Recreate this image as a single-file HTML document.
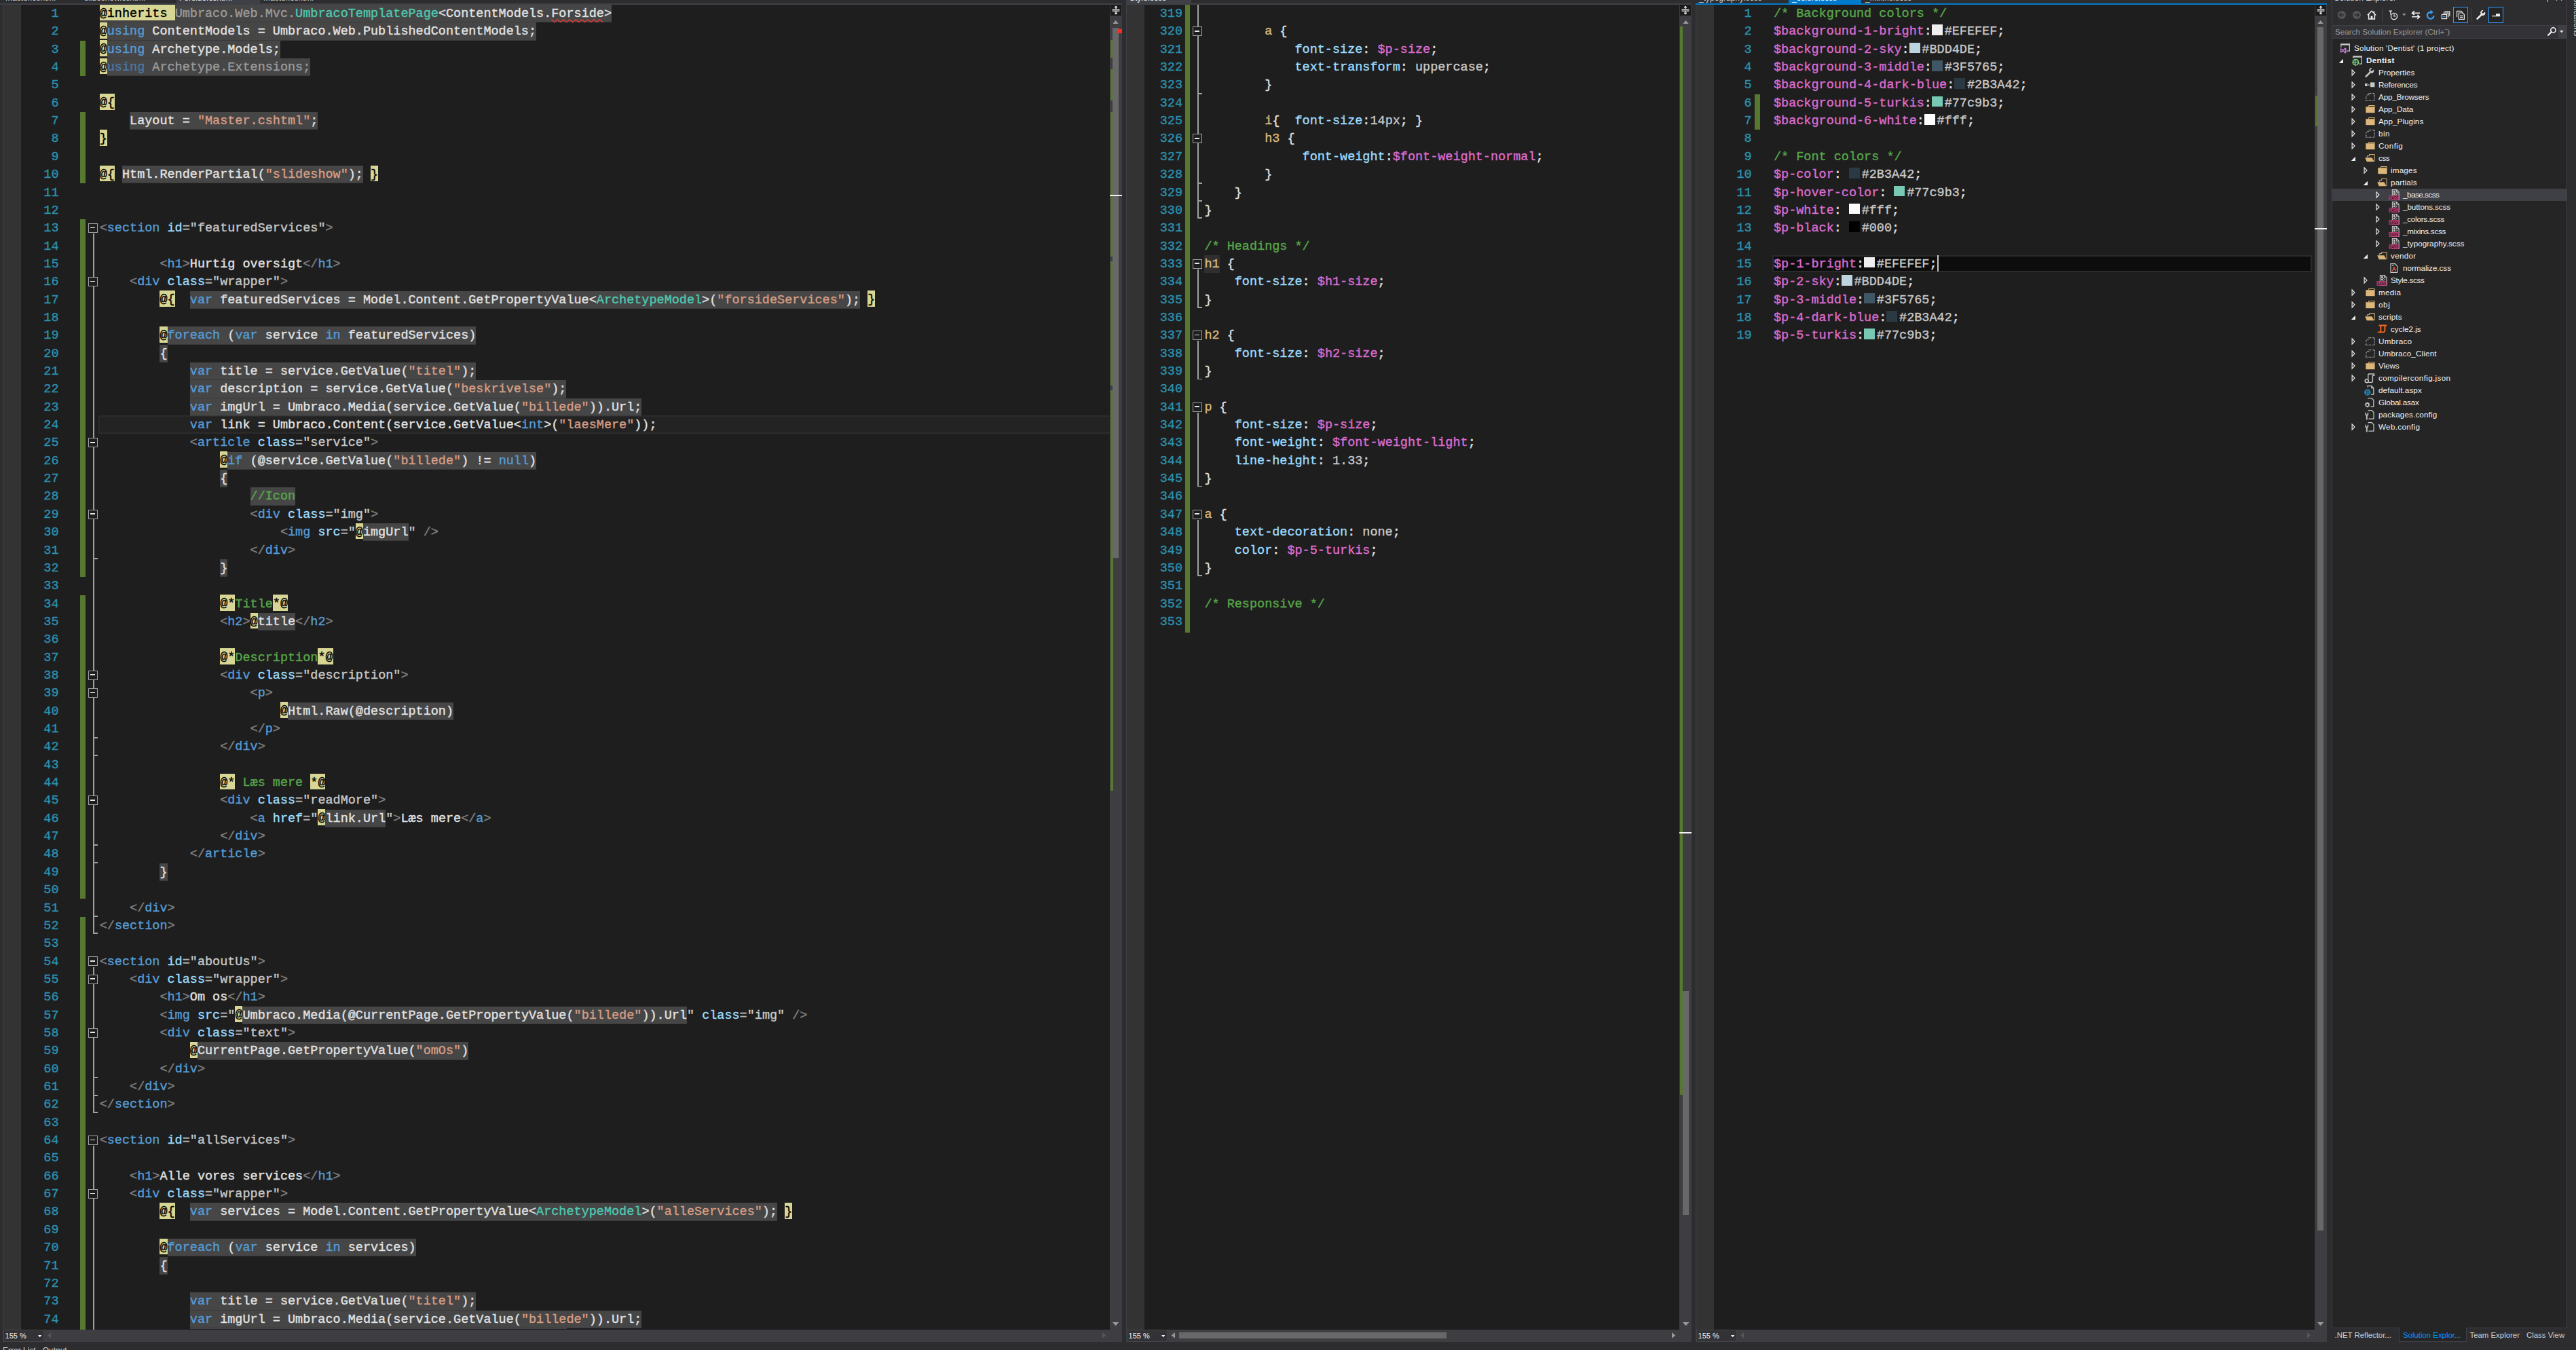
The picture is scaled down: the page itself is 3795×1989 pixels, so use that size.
<!DOCTYPE html>
<html><head><meta charset="utf-8"><title>VS</title>
<style>
html,body{margin:0;padding:0;background:#2d2d30;font-family:"Liberation Sans",sans-serif;}
body{width:3795px;height:1989px;position:relative;overflow:hidden;font-family:"Liberation Sans",sans-serif;}
#r{position:absolute;left:0;top:0;width:3795px;height:1989px;overflow:hidden;background:#2d2d30;}
#r div{position:absolute;}
.l,.n{font-family:"Liberation Mono",monospace;font-size:18.49px;line-height:27.35px;height:26.35px;white-space:pre;color:#e2e2e2;-webkit-text-stroke:0.38px;}
.n{color:#2b91af;text-align:right;}
.l i{font-style:normal;}
.l b{font-weight:normal;background:#464646;display:inline-block;height:26.35px;box-shadow:0 -1px 0 #3a3a3a inset;}
.l u{display:inline-block;width:16px;height:15.5px;margin:0 2.7px 0 0;vertical-align:-0.6px;text-decoration:none;}
.l s{display:inline-block;width:2px;height:24.5px;background:#c8c8c8;vertical-align:-6.5px;margin-left:0.2px;}
.at{background:#d7d694;color:#000;display:inline-block;height:23.6px;vertical-align:top;margin-top:-0.4px;}
.g{color:#808080}.e{color:#569cd6}.a{color:#9cdcfe}.q{color:#b4b4b4}.v{color:#c8c8c8}
.k{color:#569cd6}.kd{color:#4a78a4}.s{color:#d69d85}.t{color:#4ec9b0}.c{color:#57a64a}.dim{color:#9b9b9b}.x{color:#e2e2e2}
.err{}
.sel{color:#d7ba7d}.selh{color:#d7ba7d;background:#2f2f2f;display:inline-block;height:26.35px}.p{color:#9cdcfe}.var{color:#dc6cd0}.val{color:#c8c8c8}
.ob{width:14px;height:14px;box-sizing:border-box;border:1.5px solid #a0a0a0;background:#1e1e1e;}
.ui{white-space:pre;font-family:"Liberation Sans",sans-serif;}
.ob:after{content:"";position:absolute;left:2px;top:4.6px;width:7px;height:1.7px;background:#e6e6e6;}
</style></head><body><div id=r>

<div style="left:0px;top:0px;width:3795px;height:7px;background:#2d2d30;"></div>
<div style="left:4px;top:7px;width:1631px;height:1951.5px;background:#1e1e1e;"></div>
<div style="left:5px;top:7px;width:26.3px;height:1951.5px;background:#333333;"></div>
<div style="left:3.7px;top:5px;width:1.3px;height:1972px;background:#3f3f46;"></div>
<div style="left:144.7px;top:612.05px;width:1490.3px;height:26.75px;background:#232323;border:2px solid #2b2b2b;border-right:0;box-sizing:border-box"></div>
<div style="left:118.3px;top:59.7px;width:7.7px;height:52.7px;background:#577830;"></div>
<div style="left:118.3px;top:165.1px;width:7.7px;height:105.4px;background:#577830;"></div>
<div style="left:118.3px;top:323.2px;width:7.7px;height:527px;background:#577830;"></div>
<div style="left:118.3px;top:876.55px;width:7.7px;height:447.95px;background:#577830;"></div>
<div style="left:118.3px;top:1350.85px;width:7.7px;height:619.23px;background:#577830;"></div>
<div style="left:137.2px;top:344.28px;width:1.8px;height:1031.6px;background:#a0a0a0;"></div>
<div style="left:137.2px;top:1424.63px;width:1.8px;height:214.75px;background:#a0a0a0;"></div>
<div style="left:137.2px;top:1688.13px;width:1.8px;height:274.04px;background:#a0a0a0;"></div>
<div style="left:137.2px;top:822.45px;width:6.8px;height:1.6px;background:#a0a0a0;"></div>
<div style="left:137.2px;top:1085.95px;width:6.8px;height:1.6px;background:#a0a0a0;"></div>
<div style="left:137.2px;top:1112.3px;width:6.8px;height:1.6px;background:#a0a0a0;"></div>
<div style="left:137.2px;top:1244.05px;width:6.8px;height:1.6px;background:#a0a0a0;"></div>
<div style="left:137.2px;top:1270.4px;width:6.8px;height:1.6px;background:#a0a0a0;"></div>
<div style="left:137.2px;top:1349.45px;width:6.8px;height:1.6px;background:#a0a0a0;"></div>
<div style="left:137.2px;top:1374.48px;width:6.8px;height:1.6px;background:#a0a0a0;"></div>
<div style="left:137.2px;top:1586.6px;width:6.8px;height:1.6px;background:#a0a0a0;"></div>
<div style="left:137.2px;top:1612.95px;width:6.8px;height:1.6px;background:#a0a0a0;"></div>
<div style="left:137.2px;top:1637.98px;width:6.8px;height:1.6px;background:#a0a0a0;"></div>
<div class=ob style="left:130px;top:329.075px"></div>
<div class=ob style="left:130px;top:408.125px"></div>
<div class=ob style="left:130px;top:645.275px"></div>
<div class=ob style="left:130px;top:750.675px"></div>
<div class=ob style="left:130px;top:987.825px"></div>
<div class=ob style="left:130px;top:1014.18px"></div>
<div class=ob style="left:130px;top:1172.28px"></div>
<div class=ob style="left:130px;top:1409.43px"></div>
<div class=ob style="left:130px;top:1435.78px"></div>
<div class=ob style="left:130px;top:1514.83px"></div>
<div class=ob style="left:130px;top:1672.93px"></div>
<div class=ob style="left:130px;top:1751.98px"></div>
<div class=n style="left:26.5px;top:7px;width:60px">1</div>
<div class=l style="left:146.7px;top:7px"><b><i class=at>@inherits </i><i class=dim>Umbraco.Web.Mvc.</i><i class=t>UmbracoTemplatePage</i>&lt;ContentModels.<i class=err>Forside</i>&gt;</b></div>
<div class=n style="left:26.5px;top:33.35px;width:60px">2</div>
<div class=l style="left:146.7px;top:33.35px"><i class=at>@</i><b><i class=k>using</i> ContentModels = Umbraco.Web.PublishedContentModels;</b></div>
<div class=n style="left:26.5px;top:59.7px;width:60px">3</div>
<div class=l style="left:146.7px;top:59.7px"><i class=at>@</i><b><i class=k>using</i> Archetype.Models;</b></div>
<div class=n style="left:26.5px;top:86.05px;width:60px">4</div>
<div class=l style="left:146.7px;top:86.05px"><i class=at>@</i><b><i class=kd>using</i> <i class=dim>Archetype.Extensions;</i></b></div>
<div class=n style="left:26.5px;top:112.4px;width:60px">5</div>
<div class=n style="left:26.5px;top:138.75px;width:60px">6</div>
<div class=l style="left:146.7px;top:138.75px"><i class=at>@{</i></div>
<div class=n style="left:26.5px;top:165.1px;width:60px">7</div>
<div class=l style="left:146.7px;top:165.1px">    <b>Layout = <i class=s>"Master.cshtml"</i>;</b></div>
<div class=n style="left:26.5px;top:191.45px;width:60px">8</div>
<div class=l style="left:146.7px;top:191.45px"><i class=at>}</i></div>
<div class=n style="left:26.5px;top:217.8px;width:60px">9</div>
<div class=n style="left:26.5px;top:244.15px;width:60px">10</div>
<div class=l style="left:146.7px;top:244.15px"><i class=at>@{</i> <b>Html.RenderPartial(<i class=s>"slideshow"</i>);</b> <i class=at>}</i></div>
<div class=n style="left:26.5px;top:270.5px;width:60px">11</div>
<div class=n style="left:26.5px;top:296.85px;width:60px">12</div>
<div class=n style="left:26.5px;top:323.2px;width:60px">13</div>
<div class=l style="left:146.7px;top:323.2px"><i class=g>&lt;</i><i class=e>section</i> <i class=a>id</i><i class=q>=</i><i class=v>"featuredServices"</i><i class=g>&gt;</i></div>
<div class=n style="left:26.5px;top:349.55px;width:60px">14</div>
<div class=n style="left:26.5px;top:375.9px;width:60px">15</div>
<div class=l style="left:146.7px;top:375.9px">        <i class=g>&lt;</i><i class=e>h1</i><i class=g>&gt;</i>Hurtig oversigt<i class=g>&lt;/</i><i class=e>h1</i><i class=g>&gt;</i></div>
<div class=n style="left:26.5px;top:402.25px;width:60px">16</div>
<div class=l style="left:146.7px;top:402.25px">    <i class=g>&lt;</i><i class=e>div</i> <i class=a>class</i><i class=q>=</i><i class=v>"wrapper"</i><i class=g>&gt;</i></div>
<div class=n style="left:26.5px;top:428.6px;width:60px">17</div>
<div class=l style="left:146.7px;top:428.6px">        <i class=at>@{</i>  <b><i class=k>var</i> featuredServices = Model.Content.GetPropertyValue&lt;<i class=t>ArchetypeModel</i>&gt;(<i class=s>"forsideServices"</i>);</b> <i class=at>}</i></div>
<div class=n style="left:26.5px;top:454.95px;width:60px">18</div>
<div class=n style="left:26.5px;top:481.3px;width:60px">19</div>
<div class=l style="left:146.7px;top:481.3px">        <i class=at>@</i><b><i class=k>foreach</i> (<i class=k>var</i> service <i class=k>in</i> featuredServices)</b></div>
<div class=n style="left:26.5px;top:507.65px;width:60px">20</div>
<div class=l style="left:146.7px;top:507.65px">        <b>{</b></div>
<div class=n style="left:26.5px;top:534px;width:60px">21</div>
<div class=l style="left:146.7px;top:534px">            <b><i class=k>var</i> title = service.GetValue(<i class=s>"titel"</i>);</b></div>
<div class=n style="left:26.5px;top:560.35px;width:60px">22</div>
<div class=l style="left:146.7px;top:560.35px">            <b><i class=k>var</i> description = service.GetValue(<i class=s>"beskrivelse"</i>);</b></div>
<div class=n style="left:26.5px;top:586.7px;width:60px">23</div>
<div class=l style="left:146.7px;top:586.7px">            <b><i class=k>var</i> imgUrl = Umbraco.Media(service.GetValue(<i class=s>"billede"</i>)).Url;</b></div>
<div class=n style="left:26.5px;top:613.05px;width:60px">24</div>
<div class=l style="left:146.7px;top:613.05px">            <i class=k>var</i><i class=x> link = Umbraco.Content(service.GetValue&lt;</i><i class=k>int</i><i class=x>&gt;(</i><i class=s>"laesMere"</i><i class=x>));</i></div>
<div class=n style="left:26.5px;top:639.4px;width:60px">25</div>
<div class=l style="left:146.7px;top:639.4px">            <i class=g>&lt;</i><i class=e>article</i> <i class=a>class</i><i class=q>=</i><i class=v>"service"</i><i class=g>&gt;</i></div>
<div class=n style="left:26.5px;top:665.75px;width:60px">26</div>
<div class=l style="left:146.7px;top:665.75px">                <i class=at>@</i><b><i class=k>if</i> (@service.GetValue(<i class=s>"billede"</i>) != <i class=k>null</i>)</b></div>
<div class=n style="left:26.5px;top:692.1px;width:60px">27</div>
<div class=l style="left:146.7px;top:692.1px">                <b>{</b></div>
<div class=n style="left:26.5px;top:718.45px;width:60px">28</div>
<div class=l style="left:146.7px;top:718.45px">                    <b><i class=c>//Icon</i></b></div>
<div class=n style="left:26.5px;top:744.8px;width:60px">29</div>
<div class=l style="left:146.7px;top:744.8px">                    <i class=g>&lt;</i><i class=e>div</i> <i class=a>class</i><i class=q>=</i><i class=v>"img"</i><i class=g>&gt;</i></div>
<div class=n style="left:26.5px;top:771.15px;width:60px">30</div>
<div class=l style="left:146.7px;top:771.15px">                        <i class=g>&lt;</i><i class=e>img</i> <i class=a>src</i><i class=q>=</i><i class=v>"</i><i class=at>@</i><b>imgUrl</b><i class=v>"</i> <i class=g>/&gt;</i></div>
<div class=n style="left:26.5px;top:797.5px;width:60px">31</div>
<div class=l style="left:146.7px;top:797.5px">                    <i class=g>&lt;/</i><i class=e>div</i><i class=g>&gt;</i></div>
<div class=n style="left:26.5px;top:823.85px;width:60px">32</div>
<div class=l style="left:146.7px;top:823.85px">                <b>}</b></div>
<div class=n style="left:26.5px;top:850.2px;width:60px">33</div>
<div class=n style="left:26.5px;top:876.55px;width:60px">34</div>
<div class=l style="left:146.7px;top:876.55px">                <i class=at>@*</i><i class=c>Title</i><i class=at>*@</i></div>
<div class=n style="left:26.5px;top:902.9px;width:60px">35</div>
<div class=l style="left:146.7px;top:902.9px">                <i class=g>&lt;</i><i class=e>h2</i><i class=g>&gt;</i><i class=at>@</i><b>title</b><i class=g>&lt;/</i><i class=e>h2</i><i class=g>&gt;</i></div>
<div class=n style="left:26.5px;top:929.25px;width:60px">36</div>
<div class=n style="left:26.5px;top:955.6px;width:60px">37</div>
<div class=l style="left:146.7px;top:955.6px">                <i class=at>@*</i><i class=c>Description</i><i class=at>*@</i></div>
<div class=n style="left:26.5px;top:981.95px;width:60px">38</div>
<div class=l style="left:146.7px;top:981.95px">                <i class=g>&lt;</i><i class=e>div</i> <i class=a>class</i><i class=q>=</i><i class=v>"description"</i><i class=g>&gt;</i></div>
<div class=n style="left:26.5px;top:1008.3px;width:60px">39</div>
<div class=l style="left:146.7px;top:1008.3px">                    <i class=g>&lt;</i><i class=e>p</i><i class=g>&gt;</i></div>
<div class=n style="left:26.5px;top:1034.65px;width:60px">40</div>
<div class=l style="left:146.7px;top:1034.65px">                        <i class=at>@</i><b>Html.Raw(@description)</b></div>
<div class=n style="left:26.5px;top:1061px;width:60px">41</div>
<div class=l style="left:146.7px;top:1061px">                    <i class=g>&lt;/</i><i class=e>p</i><i class=g>&gt;</i></div>
<div class=n style="left:26.5px;top:1087.35px;width:60px">42</div>
<div class=l style="left:146.7px;top:1087.35px">                <i class=g>&lt;/</i><i class=e>div</i><i class=g>&gt;</i></div>
<div class=n style="left:26.5px;top:1113.7px;width:60px">43</div>
<div class=n style="left:26.5px;top:1140.05px;width:60px">44</div>
<div class=l style="left:146.7px;top:1140.05px">                <i class=at>@*</i><i class=c> Læs mere </i><i class=at>*@</i></div>
<div class=n style="left:26.5px;top:1166.4px;width:60px">45</div>
<div class=l style="left:146.7px;top:1166.4px">                <i class=g>&lt;</i><i class=e>div</i> <i class=a>class</i><i class=q>=</i><i class=v>"readMore"</i><i class=g>&gt;</i></div>
<div class=n style="left:26.5px;top:1192.75px;width:60px">46</div>
<div class=l style="left:146.7px;top:1192.75px">                    <i class=g>&lt;</i><i class=e>a</i> <i class=a>href</i><i class=q>=</i><i class=v>"</i><i class=at>@</i><b>link.Url</b><i class=v>"</i><i class=g>&gt;</i>Læs mere<i class=g>&lt;/</i><i class=e>a</i><i class=g>&gt;</i></div>
<div class=n style="left:26.5px;top:1219.1px;width:60px">47</div>
<div class=l style="left:146.7px;top:1219.1px">                <i class=g>&lt;/</i><i class=e>div</i><i class=g>&gt;</i></div>
<div class=n style="left:26.5px;top:1245.45px;width:60px">48</div>
<div class=l style="left:146.7px;top:1245.45px">            <i class=g>&lt;/</i><i class=e>article</i><i class=g>&gt;</i></div>
<div class=n style="left:26.5px;top:1271.8px;width:60px">49</div>
<div class=l style="left:146.7px;top:1271.8px">        <b>}</b></div>
<div class=n style="left:26.5px;top:1298.15px;width:60px">50</div>
<div class=n style="left:26.5px;top:1324.5px;width:60px">51</div>
<div class=l style="left:146.7px;top:1324.5px">    <i class=g>&lt;/</i><i class=e>div</i><i class=g>&gt;</i></div>
<div class=n style="left:26.5px;top:1350.85px;width:60px">52</div>
<div class=l style="left:146.7px;top:1350.85px"><i class=g>&lt;/</i><i class=e>section</i><i class=g>&gt;</i></div>
<div class=n style="left:26.5px;top:1377.2px;width:60px">53</div>
<div class=n style="left:26.5px;top:1403.55px;width:60px">54</div>
<div class=l style="left:146.7px;top:1403.55px"><i class=g>&lt;</i><i class=e>section</i> <i class=a>id</i><i class=q>=</i><i class=v>"aboutUs"</i><i class=g>&gt;</i></div>
<div class=n style="left:26.5px;top:1429.9px;width:60px">55</div>
<div class=l style="left:146.7px;top:1429.9px">    <i class=g>&lt;</i><i class=e>div</i> <i class=a>class</i><i class=q>=</i><i class=v>"wrapper"</i><i class=g>&gt;</i></div>
<div class=n style="left:26.5px;top:1456.25px;width:60px">56</div>
<div class=l style="left:146.7px;top:1456.25px">        <i class=g>&lt;</i><i class=e>h1</i><i class=g>&gt;</i>Om os<i class=g>&lt;/</i><i class=e>h1</i><i class=g>&gt;</i></div>
<div class=n style="left:26.5px;top:1482.6px;width:60px">57</div>
<div class=l style="left:146.7px;top:1482.6px">        <i class=g>&lt;</i><i class=e>img</i> <i class=a>src</i><i class=q>=</i><i class=v>"</i><i class=at>@</i><b>Umbraco.Media(@CurrentPage.GetPropertyValue(<i class=s>"billede"</i>)).Url</b><i class=v>"</i> <i class=a>class</i><i class=q>=</i><i class=v>"img"</i> <i class=g>/&gt;</i></div>
<div class=n style="left:26.5px;top:1508.95px;width:60px">58</div>
<div class=l style="left:146.7px;top:1508.95px">        <i class=g>&lt;</i><i class=e>div</i> <i class=a>class</i><i class=q>=</i><i class=v>"text"</i><i class=g>&gt;</i></div>
<div class=n style="left:26.5px;top:1535.3px;width:60px">59</div>
<div class=l style="left:146.7px;top:1535.3px">            <i class=at>@</i><b>CurrentPage.GetPropertyValue(<i class=s>"omOs"</i>)</b></div>
<div class=n style="left:26.5px;top:1561.65px;width:60px">60</div>
<div class=l style="left:146.7px;top:1561.65px">        <i class=g>&lt;/</i><i class=e>div</i><i class=g>&gt;</i></div>
<div class=n style="left:26.5px;top:1588px;width:60px">61</div>
<div class=l style="left:146.7px;top:1588px">    <i class=g>&lt;/</i><i class=e>div</i><i class=g>&gt;</i></div>
<div class=n style="left:26.5px;top:1614.35px;width:60px">62</div>
<div class=l style="left:146.7px;top:1614.35px"><i class=g>&lt;/</i><i class=e>section</i><i class=g>&gt;</i></div>
<div class=n style="left:26.5px;top:1640.7px;width:60px">63</div>
<div class=n style="left:26.5px;top:1667.05px;width:60px">64</div>
<div class=l style="left:146.7px;top:1667.05px"><i class=g>&lt;</i><i class=e>section</i> <i class=a>id</i><i class=q>=</i><i class=v>"allServices"</i><i class=g>&gt;</i></div>
<div class=n style="left:26.5px;top:1693.4px;width:60px">65</div>
<div class=n style="left:26.5px;top:1719.75px;width:60px">66</div>
<div class=l style="left:146.7px;top:1719.75px">    <i class=g>&lt;</i><i class=e>h1</i><i class=g>&gt;</i>Alle vores services<i class=g>&lt;/</i><i class=e>h1</i><i class=g>&gt;</i></div>
<div class=n style="left:26.5px;top:1746.1px;width:60px">67</div>
<div class=l style="left:146.7px;top:1746.1px">    <i class=g>&lt;</i><i class=e>div</i> <i class=a>class</i><i class=q>=</i><i class=v>"wrapper"</i><i class=g>&gt;</i></div>
<div class=n style="left:26.5px;top:1772.45px;width:60px">68</div>
<div class=l style="left:146.7px;top:1772.45px">        <i class=at>@{</i>  <b><i class=k>var</i> services = Model.Content.GetPropertyValue&lt;<i class=t>ArchetypeModel</i>&gt;(<i class=s>"alleServices"</i>);</b> <i class=at>}</i></div>
<div class=n style="left:26.5px;top:1798.8px;width:60px">69</div>
<div class=n style="left:26.5px;top:1825.15px;width:60px">70</div>
<div class=l style="left:146.7px;top:1825.15px">        <i class=at>@</i><b><i class=k>foreach</i> (<i class=k>var</i> service <i class=k>in</i> services)</b></div>
<div class=n style="left:26.5px;top:1851.5px;width:60px">71</div>
<div class=l style="left:146.7px;top:1851.5px">        <b>{</b></div>
<div class=n style="left:26.5px;top:1877.85px;width:60px">72</div>
<div class=n style="left:26.5px;top:1904.2px;width:60px">73</div>
<div class=l style="left:146.7px;top:1904.2px">            <b><i class=k>var</i> title = service.GetValue(<i class=s>"titel"</i>);</b></div>
<div class=n style="left:26.5px;top:1930.55px;width:60px">74</div>
<div class=l style="left:146.7px;top:1930.55px">            <b><i class=k>var</i> imgUrl = Umbraco.Media(service.GetValue(<i class=s>"billede"</i>)).Url;</b></div>
<div style="left:279.84px;top:1956.9px;width:554.75px;height:1.6px;background:#464646;"></div>
<svg style="position:absolute;left:812.4px;top:27.8px" width="80" height="6" viewBox="0 0 80 6"><polyline points="0.5,0.8 4.95,4.6 9.4,0.8 13.85,4.6 18.3,0.8 22.75,4.6 27.2,0.8 31.65,4.6 36.1,0.8 40.55,4.6 45,0.8 49.45,4.6 53.9,0.8 58.35,4.6 62.8,0.8 67.25,4.6 71.7,0.8 76.15,4.6" fill="none" stroke="#ee3a34" stroke-width="1.3"/></svg>
<div style="left:1659px;top:7px;width:815.5px;height:1951.5px;background:#1e1e1e;"></div>
<div style="left:1660px;top:7px;width:26.3px;height:1951.5px;background:#333333;"></div>
<div style="left:1658.7px;top:5px;width:1.3px;height:1972px;background:#3f3f46;"></div>
<div style="left:1745.8px;top:7px;width:7.6px;height:925.41px;background:#577830;"></div>
<div style="left:1764.2px;top:7px;width:1.8px;height:314.88px;background:#a0a0a0;"></div>
<div style="left:1764.2px;top:396.98px;width:1.8px;height:56.65px;background:#a0a0a0;"></div>
<div style="left:1764.2px;top:502.38px;width:1.8px;height:56.65px;background:#a0a0a0;"></div>
<div style="left:1764.2px;top:607.78px;width:1.8px;height:109.35px;background:#a0a0a0;"></div>
<div style="left:1764.2px;top:765.88px;width:1.8px;height:83px;background:#a0a0a0;"></div>
<div style="left:1764.2px;top:137.35px;width:6.8px;height:1.6px;background:#a0a0a0;"></div>
<div style="left:1764.2px;top:269.1px;width:6.8px;height:1.6px;background:#a0a0a0;"></div>
<div style="left:1764.2px;top:295.45px;width:6.8px;height:1.6px;background:#a0a0a0;"></div>
<div style="left:1764.2px;top:320.48px;width:6.8px;height:1.6px;background:#a0a0a0;"></div>
<div style="left:1764.2px;top:452.23px;width:6.8px;height:1.6px;background:#a0a0a0;"></div>
<div style="left:1764.2px;top:557.63px;width:6.8px;height:1.6px;background:#a0a0a0;"></div>
<div style="left:1764.2px;top:715.73px;width:6.8px;height:1.6px;background:#a0a0a0;"></div>
<div style="left:1764.2px;top:847.48px;width:6.8px;height:1.6px;background:#a0a0a0;"></div>
<div class=ob style="left:1757px;top:39.225px"></div>
<div class=ob style="left:1757px;top:197.325px"></div>
<div class=ob style="left:1757px;top:381.775px"></div>
<div class=ob style="left:1757px;top:487.175px"></div>
<div class=ob style="left:1757px;top:592.575px"></div>
<div class=ob style="left:1757px;top:750.675px"></div>
<div class=n style="left:1682px;top:7px;width:60px">319</div>
<div class=n style="left:1682px;top:33.35px;width:60px">320</div>
<div class=l style="left:1774.4px;top:33.35px">        <i class=sel>a</i> {</div>
<div class=n style="left:1682px;top:59.7px;width:60px">321</div>
<div class=l style="left:1774.4px;top:59.7px">            <i class=p>font-size</i>: <i class=var>$p-size</i>;</div>
<div class=n style="left:1682px;top:86.05px;width:60px">322</div>
<div class=l style="left:1774.4px;top:86.05px">            <i class=p>text-transform</i>: <i class=val>uppercase</i>;</div>
<div class=n style="left:1682px;top:112.4px;width:60px">323</div>
<div class=l style="left:1774.4px;top:112.4px">        }</div>
<div class=n style="left:1682px;top:138.75px;width:60px">324</div>
<div class=n style="left:1682px;top:165.1px;width:60px">325</div>
<div class=l style="left:1774.4px;top:165.1px">        <i class=sel>i</i>{  <i class=p>font-size</i>:<i class=val>14px</i>; }</div>
<div class=n style="left:1682px;top:191.45px;width:60px">326</div>
<div class=l style="left:1774.4px;top:191.45px">        <i class=sel>h3</i> {</div>
<div class=n style="left:1682px;top:217.8px;width:60px">327</div>
<div class=l style="left:1774.4px;top:217.8px">             <i class=p>font-weight</i>:<i class=var>$font-weight-normal</i>;</div>
<div class=n style="left:1682px;top:244.15px;width:60px">328</div>
<div class=l style="left:1774.4px;top:244.15px">        }</div>
<div class=n style="left:1682px;top:270.5px;width:60px">329</div>
<div class=l style="left:1774.4px;top:270.5px">    }</div>
<div class=n style="left:1682px;top:296.85px;width:60px">330</div>
<div class=l style="left:1774.4px;top:296.85px">}</div>
<div class=n style="left:1682px;top:323.2px;width:60px">331</div>
<div class=n style="left:1682px;top:349.55px;width:60px">332</div>
<div class=l style="left:1774.4px;top:349.55px"><i class=c>/* Headings */</i></div>
<div class=n style="left:1682px;top:375.9px;width:60px">333</div>
<div class=l style="left:1774.4px;top:375.9px"><i class=selh>h1</i> {</div>
<div class=n style="left:1682px;top:402.25px;width:60px">334</div>
<div class=l style="left:1774.4px;top:402.25px">    <i class=p>font-size</i>: <i class=var>$h1-size</i>;</div>
<div class=n style="left:1682px;top:428.6px;width:60px">335</div>
<div class=l style="left:1774.4px;top:428.6px">}</div>
<div class=n style="left:1682px;top:454.95px;width:60px">336</div>
<div class=n style="left:1682px;top:481.3px;width:60px">337</div>
<div class=l style="left:1774.4px;top:481.3px"><i class=sel>h2</i> {</div>
<div class=n style="left:1682px;top:507.65px;width:60px">338</div>
<div class=l style="left:1774.4px;top:507.65px">    <i class=p>font-size</i>: <i class=var>$h2-size</i>;</div>
<div class=n style="left:1682px;top:534px;width:60px">339</div>
<div class=l style="left:1774.4px;top:534px">}</div>
<div class=n style="left:1682px;top:560.35px;width:60px">340</div>
<div class=n style="left:1682px;top:586.7px;width:60px">341</div>
<div class=l style="left:1774.4px;top:586.7px"><i class=sel>p</i> {</div>
<div class=n style="left:1682px;top:613.05px;width:60px">342</div>
<div class=l style="left:1774.4px;top:613.05px">    <i class=p>font-size</i>: <i class=var>$p-size</i>;</div>
<div class=n style="left:1682px;top:639.4px;width:60px">343</div>
<div class=l style="left:1774.4px;top:639.4px">    <i class=p>font-weight</i>: <i class=var>$font-weight-light</i>;</div>
<div class=n style="left:1682px;top:665.75px;width:60px">344</div>
<div class=l style="left:1774.4px;top:665.75px">    <i class=p>line-height</i>: <i class=val>1.33</i>;</div>
<div class=n style="left:1682px;top:692.1px;width:60px">345</div>
<div class=l style="left:1774.4px;top:692.1px">}</div>
<div class=n style="left:1682px;top:718.45px;width:60px">346</div>
<div class=n style="left:1682px;top:744.8px;width:60px">347</div>
<div class=l style="left:1774.4px;top:744.8px"><i class=sel>a</i> {</div>
<div class=n style="left:1682px;top:771.15px;width:60px">348</div>
<div class=l style="left:1774.4px;top:771.15px">    <i class=p>text-decoration</i>: <i class=val>none</i>;</div>
<div class=n style="left:1682px;top:797.5px;width:60px">349</div>
<div class=l style="left:1774.4px;top:797.5px">    <i class=p>color</i>: <i class=var>$p-5-turkis</i>;</div>
<div class=n style="left:1682px;top:823.85px;width:60px">350</div>
<div class=l style="left:1774.4px;top:823.85px">}</div>
<div class=n style="left:1682px;top:850.2px;width:60px">351</div>
<div class=n style="left:1682px;top:876.55px;width:60px">352</div>
<div class=l style="left:1774.4px;top:876.55px"><i class=c>/* Responsive */</i></div>
<div class=n style="left:1682px;top:902.9px;width:60px">353</div>
<div style="left:2498px;top:7px;width:912px;height:1951.5px;background:#1e1e1e;"></div>
<div style="left:2499px;top:7px;width:26.3px;height:1951.5px;background:#333333;"></div>
<div style="left:2497.7px;top:5px;width:1.3px;height:1972px;background:#3f3f46;"></div>
<div style="left:2611px;top:376.3px;width:795px;height:25px;background:#0d0d0d;border:2.5px solid #2b2b2b;box-sizing:border-box"></div>
<div style="left:2585px;top:138.75px;width:7.6px;height:52.7px;background:#577830;"></div>
<div class=n style="left:2520.5px;top:7px;width:60px">1</div>
<div class=l style="left:2613px;top:7px"><i class=c>/* Background colors */</i></div>
<div class=n style="left:2520.5px;top:33.35px;width:60px">2</div>
<div class=l style="left:2613px;top:33.35px"><i class=var>$background-1-bright</i>:<u style="background:#EFEFEF"></u><i class=val>#EFEFEF</i>;</div>
<div class=n style="left:2520.5px;top:59.7px;width:60px">3</div>
<div class=l style="left:2613px;top:59.7px"><i class=var>$background-2-sky</i>:<u style="background:#BDD4DE"></u><i class=val>#BDD4DE</i>;</div>
<div class=n style="left:2520.5px;top:86.05px;width:60px">4</div>
<div class=l style="left:2613px;top:86.05px"><i class=var>$background-3-middle</i>:<u style="background:#3F5765"></u><i class=val>#3F5765</i>;</div>
<div class=n style="left:2520.5px;top:112.4px;width:60px">5</div>
<div class=l style="left:2613px;top:112.4px"><i class=var>$background-4-dark-blue</i>:<u style="background:#2B3A42"></u><i class=val>#2B3A42</i>;</div>
<div class=n style="left:2520.5px;top:138.75px;width:60px">6</div>
<div class=l style="left:2613px;top:138.75px"><i class=var>$background-5-turkis</i>:<u style="background:#77c9b3"></u><i class=val>#77c9b3</i>;</div>
<div class=n style="left:2520.5px;top:165.1px;width:60px">7</div>
<div class=l style="left:2613px;top:165.1px"><i class=var>$background-6-white</i>:<u style="background:#ffffff"></u><i class=val>#fff</i>;</div>
<div class=n style="left:2520.5px;top:191.45px;width:60px">8</div>
<div class=n style="left:2520.5px;top:217.8px;width:60px">9</div>
<div class=l style="left:2613px;top:217.8px"><i class=c>/* Font colors */</i></div>
<div class=n style="left:2520.5px;top:244.15px;width:60px">10</div>
<div class=l style="left:2613px;top:244.15px"><i class=var>$p-color</i>: <u style="background:#2B3A42"></u><i class=val>#2B3A42</i>;</div>
<div class=n style="left:2520.5px;top:270.5px;width:60px">11</div>
<div class=l style="left:2613px;top:270.5px"><i class=var>$p-hover-color</i>: <u style="background:#77c9b3"></u><i class=val>#77c9b3</i>;</div>
<div class=n style="left:2520.5px;top:296.85px;width:60px">12</div>
<div class=l style="left:2613px;top:296.85px"><i class=var>$p-white</i>: <u style="background:#ffffff"></u><i class=val>#fff</i>;</div>
<div class=n style="left:2520.5px;top:323.2px;width:60px">13</div>
<div class=l style="left:2613px;top:323.2px"><i class=var>$p-black</i>: <u style="background:#000000"></u><i class=val>#000</i>;</div>
<div class=n style="left:2520.5px;top:349.55px;width:60px">14</div>
<div class=n style="left:2520.5px;top:375.9px;width:60px">15</div>
<div class=l style="left:2613px;top:375.9px"><i class=var>$p-1-bright</i>:<u style="background:#EFEFEF"></u><i class=val>#EFEFEF</i>;<s></s></div>
<div class=n style="left:2520.5px;top:402.25px;width:60px">16</div>
<div class=l style="left:2613px;top:402.25px"><i class=var>$p-2-sky</i>:<u style="background:#BDD4DE"></u><i class=val>#BDD4DE</i>;</div>
<div class=n style="left:2520.5px;top:428.6px;width:60px">17</div>
<div class=l style="left:2613px;top:428.6px"><i class=var>$p-3-middle</i>:<u style="background:#3F5765"></u><i class=val>#3F5765</i>;</div>
<div class=n style="left:2520.5px;top:454.95px;width:60px">18</div>
<div class=l style="left:2613px;top:454.95px"><i class=var>$p-4-dark-blue</i>:<u style="background:#2B3A42"></u><i class=val>#2B3A42</i>;</div>
<div class=n style="left:2520.5px;top:481.3px;width:60px">19</div>
<div class=l style="left:2613px;top:481.3px"><i class=var>$p-5-turkis</i>:<u style="background:#77c9b3"></u><i class=val>#77c9b3</i>;</div>
<div style="left:1635px;top:7px;width:18px;height:1951.5px;background:#3e3e42;"></div>
<svg style="position:absolute;left:1636px;top:7px" width="16" height="16" viewBox="0 0 16 16"><rect width="16" height="16" fill="#1b1b1c"/><g stroke="#f1f1f1" stroke-width="1.3" fill="none"><path d="M2.5 6.6h11M2.5 9.2h11M8 2.5v4M8 9.2v4.3"/><path d="M6.2 4.2L8 2.4l1.8 1.8M6.2 11.8L8 13.6l1.8-1.8"/></g></svg>
<svg style="position:absolute;left:1639.4px;top:29.74px" width="9.2" height="5.52"><polygon points="0,5.52 9.2,5.52 4.6,0" fill="#999999"/></svg>
<svg style="position:absolute;left:1639.4px;top:1947.74px" width="9.2" height="5.52"><polygon points="0,0 9.2,0 4.6,5.52" fill="#999999"/></svg>
<div style="left:1635.6px;top:59px;width:4px;height:26px;background:#577830;"></div>
<div style="left:1635.6px;top:102px;width:4px;height:46px;background:#577830;"></div>
<div style="left:1635.6px;top:165px;width:4px;height:213px;background:#577830;"></div>
<div style="left:1635.6px;top:385px;width:4px;height:183px;background:#577830;"></div>
<div style="left:1635.6px;top:575px;width:4px;height:589.7px;background:#577830;"></div>
<div style="left:1639.2px;top:41px;width:9px;height:781px;background:#686868;"></div>
<div style="left:1647px;top:43px;width:5.5px;height:6px;background:#ff2a2a;"></div>
<div style="left:1634.5px;top:286.5px;width:18px;height:2px;background:#f1f1f1;"></div>
<div style="left:4px;top:1958.5px;width:1649px;height:18.5px;background:#3e3e42;"></div>
<div style="left:6px;top:1960px;width:58px;height:15.5px;background:#333337;box-shadow:0 0 0 1px #434346;"></div>
<div class=ui style="left:7.6px;top:1960px;line-height:16px;color:#f1f1f1;font-size:11px">155 %</div>
<svg style="position:absolute;left:55.8px;top:1966.68px" width="5.4" height="3.24"><polygon points="0,0 5.4,0 2.7,3.24" fill="#f1f1f1"/></svg>
<svg style="position:absolute;left:70.36px;top:1963.1px" width="5.28" height="8.8"><polygon points="5.28,0 5.28,8.8 0,4.4" fill="#56565a"/></svg>
<svg style="position:absolute;left:1623.86px;top:1963.1px" width="5.28" height="8.8"><polygon points="0,0 0,8.8 5.28,4.4" fill="#56565a"/></svg>
<div style="left:1653px;top:0px;width:6px;height:1977px;background:#2d2d30;"></div>
<div style="left:2474.3px;top:7px;width:18px;height:1951.5px;background:#3e3e42;"></div>
<svg style="position:absolute;left:2475.3px;top:7px" width="16" height="16" viewBox="0 0 16 16"><rect width="16" height="16" fill="#1b1b1c"/><g stroke="#f1f1f1" stroke-width="1.3" fill="none"><path d="M2.5 6.6h11M2.5 9.2h11M8 2.5v4M8 9.2v4.3"/><path d="M6.2 4.2L8 2.4l1.8 1.8M6.2 11.8L8 13.6l1.8-1.8"/></g></svg>
<svg style="position:absolute;left:2478.7px;top:29.74px" width="9.2" height="5.52"><polygon points="0,5.52 9.2,5.52 4.6,0" fill="#999999"/></svg>
<svg style="position:absolute;left:2478.7px;top:1947.74px" width="9.2" height="5.52"><polygon points="0,0 9.2,0 4.6,5.52" fill="#999999"/></svg>
<div style="left:2474.9px;top:39px;width:4px;height:1574px;background:#577830;"></div>
<div style="left:2478.5px;top:1459.5px;width:9px;height:330px;background:#686868;"></div>
<div style="left:2473.8px;top:1226px;width:18px;height:2px;background:#f1f1f1;"></div>
<div style="left:1659px;top:1958.5px;width:833px;height:18.5px;background:#3e3e42;"></div>
<div style="left:1661px;top:1960px;width:58px;height:15.5px;background:#333337;box-shadow:0 0 0 1px #434346;"></div>
<div class=ui style="left:1662.6px;top:1960px;line-height:16px;color:#f1f1f1;font-size:11px">155 %</div>
<svg style="position:absolute;left:1710.8px;top:1966.68px" width="5.4" height="3.24"><polygon points="0,0 5.4,0 2.7,3.24" fill="#f1f1f1"/></svg>
<svg style="position:absolute;left:1725.36px;top:1963.1px" width="5.28" height="8.8"><polygon points="5.28,0 5.28,8.8 0,4.4" fill="#56565a"/></svg>
<svg style="position:absolute;left:2462.86px;top:1963.1px" width="5.28" height="8.8"><polygon points="0,0 0,8.8 5.28,4.4" fill="#999999"/></svg>
<div style="left:1737px;top:1963px;width:394px;height:9px;background:#686868;"></div>
<svg style="position:absolute;left:1725.86px;top:1963.1px" width="5.28" height="8.8"><polygon points="5.28,0 5.28,8.8 0,4.4" fill="#999999"/></svg>
<div style="left:2492px;top:0px;width:6px;height:1977px;background:#2d2d30;"></div>
<div style="left:3410px;top:7px;width:18px;height:1951.5px;background:#3e3e42;"></div>
<svg style="position:absolute;left:3411px;top:7px" width="16" height="16" viewBox="0 0 16 16"><rect width="16" height="16" fill="#1b1b1c"/><g stroke="#f1f1f1" stroke-width="1.3" fill="none"><path d="M2.5 6.6h11M2.5 9.2h11M8 2.5v4M8 9.2v4.3"/><path d="M6.2 4.2L8 2.4l1.8 1.8M6.2 11.8L8 13.6l1.8-1.8"/></g></svg>
<svg style="position:absolute;left:3414.4px;top:29.74px" width="9.2" height="5.52"><polygon points="0,5.52 9.2,5.52 4.6,0" fill="#999999"/></svg>
<svg style="position:absolute;left:3414.4px;top:1947.74px" width="9.2" height="5.52"><polygon points="0,0 9.2,0 4.6,5.52" fill="#999999"/></svg>
<div style="left:3410.6px;top:140.5px;width:4px;height:45.3px;background:#577830;"></div>
<div style="left:3414.2px;top:40px;width:9px;height:1773px;background:#686868;"></div>
<div style="left:3409.5px;top:336px;width:18px;height:2px;background:#f1f1f1;"></div>
<div style="left:2498px;top:1958.5px;width:930px;height:18.5px;background:#3e3e42;"></div>
<div style="left:2500px;top:1960px;width:58px;height:15.5px;background:#333337;box-shadow:0 0 0 1px #434346;"></div>
<div class=ui style="left:2501.6px;top:1960px;line-height:16px;color:#f1f1f1;font-size:11px">155 %</div>
<svg style="position:absolute;left:2549.8px;top:1966.68px" width="5.4" height="3.24"><polygon points="0,0 5.4,0 2.7,3.24" fill="#f1f1f1"/></svg>
<svg style="position:absolute;left:2564.36px;top:1963.1px" width="5.28" height="8.8"><polygon points="5.28,0 5.28,8.8 0,4.4" fill="#56565a"/></svg>
<svg style="position:absolute;left:3398.86px;top:1963.1px" width="5.28" height="8.8"><polygon points="0,0 0,8.8 5.28,4.4" fill="#56565a"/></svg>
<div style="left:0;top:0;width:3795px;height:7px;background:#2d2d30"></div>
<div style="left:0px;top:5.2px;width:1653px;height:1.8px;background:#3f3f46;"></div>
<div style="left:260px;top:0px;width:123px;height:7px;background:#3f3f46;"></div>
<div style="left:1659px;top:5.2px;width:833px;height:1.8px;background:#3f3f46;"></div>
<div style="left:1659px;top:0px;width:96px;height:7px;background:#3f3f46;"></div>
<div style="left:2498px;top:5px;width:930px;height:2px;background:#007acc;"></div>
<div style="left:2635px;top:0px;width:107px;height:7px;background:#007acc;"></div>
<div class=ui style="left:8px;top:-10.4px;font-size:12px;color:#d0d0d0;line-height:14px">Master.cshtml</div>
<div class=ui style="left:124px;top:-10.4px;font-size:12px;color:#d0d0d0;line-height:14px">slideshow.cshtml</div>
<div class=ui style="left:264px;top:-10.4px;font-size:12px;color:#f1f1f1;line-height:14px">Forside.cshtml</div>
<div class=ui style="left:388px;top:-10.4px;font-size:12px;color:#d0d0d0;line-height:14px">Master.cshtml</div>
<div class=ui style="left:1664px;top:-10.4px;font-size:12px;color:#f1f1f1;line-height:14px">Style.scss</div>
<div class=ui style="left:2503px;top:-10.4px;font-size:12px;color:#d0d0d0;line-height:14px">_typography.scss</div>
<div class=ui style="left:2640px;top:-10.4px;font-size:12px;color:#ffffff;line-height:14px">_colors.scss</div>
<div class=ui style="left:2748px;top:-10.4px;font-size:12px;color:#d0d0d0;line-height:14px">_mixins.scss</div>
<div style="left:0px;top:1977px;width:3795px;height:12px;background:#2d2d30;"></div>
<div class=ui style="left:4px;top:1983.4px;font-size:12px;color:#d0d0d0;line-height:14px">Error List&nbsp;&nbsp; Output</div>
<div style="left:3428.5px;top:0px;width:7px;height:1977px;background:#2d2d30;"></div>
<div style="left:3435px;top:0px;width:346.5px;height:1956.5px;background:#252526;"></div>
<div style="left:3435px;top:0px;width:346.5px;height:36.5px;background:#2d2d30;"></div>
<div style="left:3434.5px;top:0px;width:1px;height:1956.5px;background:#3f3f46;"></div>
<div style="left:3781px;top:0px;width:1px;height:1956.5px;background:#3f3f46;"></div>
<div style="left:3435px;top:1956px;width:346.5px;height:1px;background:#3f3f46;"></div>
<div class=ui style="left:3438.5px;top:-10.5px;font-size:12px;color:#d8dde4;line-height:14px">Solution Explorer</div>
<div style="left:3752.6px;top:0px;width:1.2px;height:3px;background:#e8e8e8;"></div>
<svg style="position:absolute;left:3764.2px;top:-2.16px" width="5.2" height="3.12"><polygon points="0,0 5.2,0 2.6,3.12" fill="#e8e8e8"/></svg>
<svg style="position:absolute;left:3770.6px;top:-2.16px" width="5.2" height="3.12"><polygon points="0,0 5.2,0 2.6,3.12" fill="#e8e8e8"/></svg>
<div style="left:3435px;top:36.5px;width:346.5px;height:20px;background:#333337;box-sizing:border-box;border:1px solid #3f3f46"></div>
<div style="left:3769px;top:37.5px;width:12px;height:18px;background:#3f3f46;"></div>
<div class=ui style="left:3440px;top:37.5px;font-size:11.7px;color:#999999;line-height:18px">Search Solution Explorer (Ctrl+¨)</div>
<svg style="position:absolute;left:3752px;top:39px" width="15" height="15" viewBox="0 0 15 15"><circle cx="9.4" cy="5.4" r="3.6" fill="none" stroke="#f1f1f1" stroke-width="1.6"/><path d="M6.8 8L2 12.8" stroke="#f1f1f1" stroke-width="2.2" stroke-linecap="round"/></svg>
<svg style="position:absolute;left:3771.2px;top:44.82px" width="5.6" height="3.36"><polygon points="0,0 5.6,0 2.8,3.36" fill="#f1f1f1"/></svg>
<svg style="position:absolute;left:3441.8px;top:14px" width="16" height="16" viewBox="0 0 16 16"><circle cx="8" cy="8" r="6" fill="#555558"/><path d="M11.5 8H5.2M7.6 5.2L4.8 8l2.8 2.8" stroke="#2d2d30" stroke-width="1.6" fill="none"/></svg>
<svg style="position:absolute;left:3463.8px;top:14px" width="16" height="16" viewBox="0 0 16 16"><circle cx="8" cy="8" r="6" fill="#555558"/><path d="M4.5 8h6.3M8.4 5.2L11.2 8l-2.8 2.8" stroke="#2d2d30" stroke-width="1.6" fill="none"/></svg>
<svg style="position:absolute;left:3485.8px;top:14px" width="16" height="16" viewBox="0 0 16 16"><path d="M1.8 8.2L8 2.2l6.2 6M3.6 7v7h8.8V7" fill="none" stroke="#f1f1f1" stroke-width="1.5"/><rect x="6.6" y="9.6" width="2.8" height="4.4" fill="#f1f1f1"/><rect x="10.6" y="2.4" width="1.6" height="3" fill="#f1f1f1"/></svg>
<div style="left:3509px;top:12px;width:1px;height:20px;background:#46464a;"></div>
<svg style="position:absolute;left:3518.3px;top:14px" width="16" height="16" viewBox="0 0 16 16"><circle cx="9" cy="10" r="4.6" fill="none" stroke="#f1f1f1" stroke-width="1.3"/><path d="M9 7.2V10h2.6" fill="none" stroke="#f1f1f1" stroke-width="1.2"/><path d="M1.2 1.6h5.2L3.8 4.6z" fill="#f1f1f1"/><path d="M3.8 4v3.4" stroke="#f1f1f1" stroke-width="1.1"/></svg>
<svg style="position:absolute;left:3539.2px;top:20.12px" width="5.6" height="3.36"><polygon points="0,0 5.6,0 2.8,3.36" fill="#999999"/></svg>
<svg style="position:absolute;left:3551px;top:14px" width="16" height="16" viewBox="0 0 16 16"><path d="M14 5.2H3M5.8 2.2L2.6 5.2l3.2 3M2 10.8h11M10.2 7.8l3.2 3-3.2 3" fill="none" stroke="#f1f1f1" stroke-width="1.6"/></svg>
<svg style="position:absolute;left:3573px;top:14px" width="16" height="16" viewBox="0 0 16 16"><path d="M12.6 9.2a4.9 4.9 0 1 1-4-5.3" fill="none" stroke="#3aa0f5" stroke-width="2.2"/><path d="M7.6 0.6l4.2 3.4-4.2 3z" fill="#3aa0f5"/></svg>
<svg style="position:absolute;left:3594.9px;top:14px" width="16" height="16" viewBox="0 0 16 16"><path d="M6.2 3.2h7.6v6.6M4.4 5.2h7.4v6.4" fill="none" stroke="#f1f1f1" stroke-width="1.2"/><rect x="2.4" y="7.4" width="7.2" height="6.2" fill="#2d2d30" stroke="#f1f1f1" stroke-width="1.2"/><path d="M4.2 10.5h3.6" stroke="#3aa0f5" stroke-width="1.4"/></svg>
<div style="left:3613.8px;top:10.2px;width:22px;height:24px;box-sizing:border-box;border:1px solid #3399ff;background:#252526"></div>
<svg style="position:absolute;left:3616.8px;top:14px" width="16" height="16" viewBox="0 0 16 16"><path d="M2.6 11.2V2.4h6.2l2.4 2.4" fill="none" stroke="#f1f1f1" stroke-width="1.2"/><path d="M5.4 5h5.4l2.6 2.6v6.8h-8z" fill="#252526" stroke="#f1f1f1" stroke-width="1.2"/><path d="M7 9h4.6M7 11.4h4.6" stroke="#f1f1f1" stroke-width="1.1"/></svg>
<div style="left:3640.2px;top:12px;width:1px;height:20px;background:#46464a;"></div>
<svg style="position:absolute;left:3646.6px;top:14px" width="16" height="16" viewBox="0 0 16 16"><path d="M2.6 13.6l6-6" stroke="#f1f1f1" stroke-width="2.6" stroke-linecap="round"/><path d="M13.8 3.4l-2.4 2.4-1.8-.4-.4-1.8 2.4-2.4a3.6 3.6 0 0 0-4.2 4.8l.9.9 2 2a3.6 3.6 0 0 0 3.5-5.5z" fill="#f1f1f1"/></svg>
<div style="left:3666px;top:10.2px;width:22px;height:24px;box-sizing:border-box;border:1px solid #3399ff;background:#252526"></div>
<svg style="position:absolute;left:3669px;top:14px" width="16" height="16" viewBox="0 0 16 16"><path d="M2 9.6h12" stroke="#f1f1f1" stroke-width="1.3"/><rect x="8" y="6.2" width="6" height="3.4" fill="#f1f1f1"/></svg>
<svg style="position:absolute;left:3446.5px;top:63px" width="16" height="16" viewBox="0 0 16 16"><path d="M1.800 7V1.800h12.600v10.400H10" fill="none" stroke="#c8c8c8" stroke-width="1.200"/><path d="M1.800 2.800h12.600" stroke="#c8c8c8" stroke-width="1.800"/><path d="M.8 8.800l1.200-.6 2.600 2.200 3-3.200 1.800.8v7l-1.800.8-3-3.200L2 14.800l-1.200-.6z" fill="#c27bd8"/><path d="M2.200 10.200v2.600l1.400-1.300zM7.600 9.600v3.800l-2.200-1.900z" fill="#252526"/></svg>
<div class=ui style="left:3468px;top:61.5px;line-height:18px;font-size:11.7px;letter-spacing:0.177px;color:#f1f1f1;">Solution 'Dentist' (1 project)</div>
<svg style="position:absolute;left:3444.5px;top:85.5px" width="8" height="8" viewBox="0 0 8 8"><path d="M7 .8V7H.8z" fill="#f1f1f1"/></svg>
<svg style="position:absolute;left:3464.5px;top:81px" width="16" height="16" viewBox="0 0 16 16"><path d="M1.800 5V1.800h12.600v11.400h-4" fill="none" stroke="#c8c8c8" stroke-width="1.200"/><path d="M1.800 2.800h12.600" stroke="#c8c8c8" stroke-width="1.800"/><circle cx="5.400" cy="10.800" r="4.300" fill="#252526" stroke="#7fd67f" stroke-width="1.300"/><path d="M1.100 10.800h8.600M5.400 6.500v8.600M3.500 7.600c-.8 2.100-.8 4.300 0 6.400M7.300 7.600c.8 2.100.8 4.300 0 6.400" fill="none" stroke="#7fd67f" stroke-width=".900"/></svg>
<div class=ui style="left:3486px;top:79.5px;line-height:18px;font-size:11.7px;letter-spacing:0.282px;color:#f1f1f1;font-weight:bold;">Dentist</div>
<svg style="position:absolute;left:3463.5px;top:101px" width="8" height="12" viewBox="0 0 8 12"><path d="M1.100 1.900L5 6 1.100 10.100z" fill="none" stroke="#f1f1f1" stroke-width="1.100"/></svg>
<svg style="position:absolute;left:3482.5px;top:99px" width="16" height="16" viewBox="0 0 16 16"><path d="M2.6 13.6l6-6" stroke="#c8c8c8" stroke-width="2.6" stroke-linecap="round"/><path d="M13.8 3.4l-2.4 2.4-1.8-.4-.4-1.8 2.4-2.4a3.6 3.6 0 0 0-4.2 4.8l.9.9 2 2a3.6 3.6 0 0 0 3.5-5.5z" fill="#c8c8c8"/></svg>
<div class=ui style="left:3504px;top:97.5px;line-height:18px;font-size:11.7px;letter-spacing:0.012px;color:#f1f1f1;">Properties</div>
<svg style="position:absolute;left:3463.5px;top:119px" width="8" height="12" viewBox="0 0 8 12"><path d="M1.100 1.900L5 6 1.100 10.100z" fill="none" stroke="#f1f1f1" stroke-width="1.100"/></svg>
<svg style="position:absolute;left:3482.5px;top:117px" width="16" height="16" viewBox="0 0 16 16"><rect x="1" y="6" width="3.6" height="4" fill="#c8c8c8"/><rect x="9" y="4.4" width="6.4" height="6.8" fill="#c8c8c8"/><rect x="5.6" y="7.4" width="2.2" height="1.4" fill="#c8c8c8"/></svg>
<div class=ui style="left:3504px;top:115.5px;line-height:18px;font-size:11.7px;letter-spacing:-0.248px;color:#f1f1f1;">References</div>
<svg style="position:absolute;left:3463.5px;top:137px" width="8" height="12" viewBox="0 0 8 12"><path d="M1.100 1.900L5 6 1.100 10.100z" fill="none" stroke="#f1f1f1" stroke-width="1.100"/></svg>
<svg style="position:absolute;left:3482.5px;top:135px" width="16" height="16" viewBox="0 0 16 16"><path d="M2.8 13.2V6.600l2-2h2V2.600h8.300v10.600z" fill="none" stroke="#d0d0d0" stroke-width="1.100" stroke-dasharray="1.100 1.100"/></svg>
<div class=ui style="left:3504px;top:133.5px;line-height:18px;font-size:11.7px;letter-spacing:-0.135px;color:#f1f1f1;">App_Browsers</div>
<svg style="position:absolute;left:3463.5px;top:155px" width="8" height="12" viewBox="0 0 8 12"><path d="M1.100 1.900L5 6 1.100 10.100z" fill="none" stroke="#f1f1f1" stroke-width="1.100"/></svg>
<svg style="position:absolute;left:3482.5px;top:153px" width="16" height="16" viewBox="0 0 16 16"><path d="M2.3 4.2h13.3v9H2.3z" fill="#dcb67a"/><path d="M6.6 4.2V2.5h8.5v1.7" fill="none" stroke="#dcb67a" stroke-width="1"/></svg>
<div class=ui style="left:3504px;top:151.5px;line-height:18px;font-size:11.7px;letter-spacing:-0.098px;color:#f1f1f1;">App_Data</div>
<svg style="position:absolute;left:3463.5px;top:173px" width="8" height="12" viewBox="0 0 8 12"><path d="M1.100 1.900L5 6 1.100 10.100z" fill="none" stroke="#f1f1f1" stroke-width="1.100"/></svg>
<svg style="position:absolute;left:3482.5px;top:171px" width="16" height="16" viewBox="0 0 16 16"><path d="M2.3 4.2h13.3v9H2.3z" fill="#dcb67a"/><path d="M6.6 4.2V2.5h8.5v1.7" fill="none" stroke="#dcb67a" stroke-width="1"/></svg>
<div class=ui style="left:3504px;top:169.5px;line-height:18px;font-size:11.7px;letter-spacing:0.06px;color:#f1f1f1;">App_Plugins</div>
<svg style="position:absolute;left:3463.5px;top:191px" width="8" height="12" viewBox="0 0 8 12"><path d="M1.100 1.900L5 6 1.100 10.100z" fill="none" stroke="#f1f1f1" stroke-width="1.100"/></svg>
<svg style="position:absolute;left:3482.5px;top:189px" width="16" height="16" viewBox="0 0 16 16"><path d="M2.8 13.2V6.600l2-2h2V2.600h8.300v10.600z" fill="none" stroke="#d0d0d0" stroke-width="1.100" stroke-dasharray="1.100 1.100"/></svg>
<div class=ui style="left:3504px;top:187.5px;line-height:18px;font-size:11.7px;letter-spacing:0.43px;color:#f1f1f1;">bin</div>
<svg style="position:absolute;left:3463.5px;top:209px" width="8" height="12" viewBox="0 0 8 12"><path d="M1.100 1.900L5 6 1.100 10.100z" fill="none" stroke="#f1f1f1" stroke-width="1.100"/></svg>
<svg style="position:absolute;left:3482.5px;top:207px" width="16" height="16" viewBox="0 0 16 16"><path d="M2.3 4.2h13.3v9H2.3z" fill="#dcb67a"/><path d="M6.6 4.2V2.5h8.5v1.7" fill="none" stroke="#dcb67a" stroke-width="1"/></svg>
<div class=ui style="left:3504px;top:205.5px;line-height:18px;font-size:11.7px;letter-spacing:0.401px;color:#f1f1f1;">Config</div>
<svg style="position:absolute;left:3462.5px;top:229.5px" width="8" height="8" viewBox="0 0 8 8"><path d="M7 .8V7H.8z" fill="#f1f1f1"/></svg>
<svg style="position:absolute;left:3482.5px;top:225px" width="16" height="16" viewBox="0 0 16 16"><path d="M4.4 6.600V4.700h3.200V2.500h7.500V13" fill="none" stroke="#dcb67a" stroke-width="1"/><path d="M1.2 7.200h10.200l3.200 6H3.800z" fill="#dcb67a"/></svg>
<div class=ui style="left:3504px;top:223.5px;line-height:18px;font-size:11.7px;letter-spacing:-0.444px;color:#f1f1f1;">css</div>
<svg style="position:absolute;left:3481.5px;top:245px" width="8" height="12" viewBox="0 0 8 12"><path d="M1.100 1.900L5 6 1.100 10.100z" fill="none" stroke="#f1f1f1" stroke-width="1.100"/></svg>
<svg style="position:absolute;left:3500.5px;top:243px" width="16" height="16" viewBox="0 0 16 16"><path d="M2.3 4.2h13.3v9H2.3z" fill="#dcb67a"/><path d="M6.6 4.2V2.5h8.5v1.7" fill="none" stroke="#dcb67a" stroke-width="1"/></svg>
<div class=ui style="left:3522px;top:241.5px;line-height:18px;font-size:11.7px;letter-spacing:0.169px;color:#f1f1f1;">images</div>
<svg style="position:absolute;left:3480.5px;top:265.5px" width="8" height="8" viewBox="0 0 8 8"><path d="M7 .8V7H.8z" fill="#f1f1f1"/></svg>
<svg style="position:absolute;left:3500.5px;top:261px" width="16" height="16" viewBox="0 0 16 16"><path d="M4.4 6.600V4.700h3.200V2.500h7.500V13" fill="none" stroke="#dcb67a" stroke-width="1"/><path d="M1.2 7.200h10.200l3.200 6H3.800z" fill="#dcb67a"/></svg>
<div class=ui style="left:3522px;top:259.5px;line-height:18px;font-size:11.7px;letter-spacing:0.127px;color:#f1f1f1;">partials</div>
<div style="left:3435.5px;top:277.6px;width:345.5px;height:18.4px;background:#3f3f46;"></div>
<svg style="position:absolute;left:3499.5px;top:281px" width="8" height="12" viewBox="0 0 8 12"><path d="M1.100 1.900L5 6 1.100 10.100z" fill="none" stroke="#f1f1f1" stroke-width="1.100"/></svg>
<svg style="position:absolute;left:3518.5px;top:279px" width="16" height="16" viewBox="0 0 16 16"><path d="M5.400 0.600h6.400l3.300 3.300v11.200H5.400z" fill="none" stroke="#c8c8c8" stroke-width="1.100"/><path d="M11.600 0.800v3.400h3.300" fill="none" stroke="#c8c8c8" stroke-width="1"/><path d="M7.400 2.600h1.800v1.800H7.400zM7.400 6h1.800v1.800H7.400zM9.800 4.600l1.800 1.800M10.400 8.800l2.600-2.600" stroke="#c8c8c8" stroke-width="1" fill="#c8c8c8"/><rect x="0.500" y="9.100" width="14.200" height="6.700" fill="#c6397f"/><text x="1.100" y="15" font-family="Liberation Sans" font-weight="bold" font-size="6.600" fill="#2a2023" textLength="13" lengthAdjust="spacingAndGlyphs">SASS</text></svg>
<div class=ui style="left:3540px;top:277.5px;line-height:18px;font-size:11.7px;letter-spacing:-0.507px;color:#f1f1f1;">_base.scss</div>
<svg style="position:absolute;left:3499.5px;top:299px" width="8" height="12" viewBox="0 0 8 12"><path d="M1.100 1.900L5 6 1.100 10.100z" fill="none" stroke="#f1f1f1" stroke-width="1.100"/></svg>
<svg style="position:absolute;left:3518.5px;top:297px" width="16" height="16" viewBox="0 0 16 16"><path d="M5.400 0.600h6.400l3.300 3.300v11.200H5.400z" fill="none" stroke="#c8c8c8" stroke-width="1.100"/><path d="M11.600 0.800v3.400h3.300" fill="none" stroke="#c8c8c8" stroke-width="1"/><path d="M7.400 2.600h1.800v1.800H7.400zM7.400 6h1.800v1.800H7.400zM9.800 4.600l1.800 1.800M10.400 8.800l2.600-2.600" stroke="#c8c8c8" stroke-width="1" fill="#c8c8c8"/><rect x="0.500" y="9.100" width="14.200" height="6.700" fill="#c6397f"/><text x="1.100" y="15" font-family="Liberation Sans" font-weight="bold" font-size="6.600" fill="#2a2023" textLength="13" lengthAdjust="spacingAndGlyphs">SASS</text></svg>
<div class=ui style="left:3540px;top:295.5px;line-height:18px;font-size:11.7px;letter-spacing:-0.113px;color:#f1f1f1;">_buttons.scss</div>
<svg style="position:absolute;left:3499.5px;top:317px" width="8" height="12" viewBox="0 0 8 12"><path d="M1.100 1.900L5 6 1.100 10.100z" fill="none" stroke="#f1f1f1" stroke-width="1.100"/></svg>
<svg style="position:absolute;left:3518.5px;top:315px" width="16" height="16" viewBox="0 0 16 16"><path d="M5.400 0.600h6.400l3.300 3.300v11.200H5.400z" fill="none" stroke="#c8c8c8" stroke-width="1.100"/><path d="M11.600 0.800v3.400h3.300" fill="none" stroke="#c8c8c8" stroke-width="1"/><path d="M7.400 2.600h1.800v1.800H7.400zM7.400 6h1.800v1.800H7.400zM9.800 4.600l1.800 1.800M10.400 8.800l2.600-2.600" stroke="#c8c8c8" stroke-width="1" fill="#c8c8c8"/><rect x="0.500" y="9.100" width="14.200" height="6.700" fill="#c6397f"/><text x="1.100" y="15" font-family="Liberation Sans" font-weight="bold" font-size="6.600" fill="#2a2023" textLength="13" lengthAdjust="spacingAndGlyphs">SASS</text></svg>
<div class=ui style="left:3540px;top:313.5px;line-height:18px;font-size:11.7px;letter-spacing:-0.259px;color:#f1f1f1;">_colors.scss</div>
<svg style="position:absolute;left:3499.5px;top:335px" width="8" height="12" viewBox="0 0 8 12"><path d="M1.100 1.900L5 6 1.100 10.100z" fill="none" stroke="#f1f1f1" stroke-width="1.100"/></svg>
<svg style="position:absolute;left:3518.5px;top:333px" width="16" height="16" viewBox="0 0 16 16"><path d="M5.400 0.600h6.400l3.300 3.300v11.200H5.400z" fill="none" stroke="#c8c8c8" stroke-width="1.100"/><path d="M11.600 0.800v3.400h3.300" fill="none" stroke="#c8c8c8" stroke-width="1"/><path d="M7.400 2.600h1.800v1.800H7.400zM7.400 6h1.800v1.800H7.400zM9.800 4.600l1.800 1.800M10.400 8.800l2.600-2.600" stroke="#c8c8c8" stroke-width="1" fill="#c8c8c8"/><rect x="0.500" y="9.100" width="14.200" height="6.700" fill="#c6397f"/><text x="1.100" y="15" font-family="Liberation Sans" font-weight="bold" font-size="6.600" fill="#2a2023" textLength="13" lengthAdjust="spacingAndGlyphs">SASS</text></svg>
<div class=ui style="left:3540px;top:331.5px;line-height:18px;font-size:11.7px;letter-spacing:-0.254px;color:#f1f1f1;">_mixins.scss</div>
<svg style="position:absolute;left:3499.5px;top:353px" width="8" height="12" viewBox="0 0 8 12"><path d="M1.100 1.900L5 6 1.100 10.100z" fill="none" stroke="#f1f1f1" stroke-width="1.100"/></svg>
<svg style="position:absolute;left:3518.5px;top:351px" width="16" height="16" viewBox="0 0 16 16"><path d="M5.400 0.600h6.400l3.300 3.300v11.200H5.400z" fill="none" stroke="#c8c8c8" stroke-width="1.100"/><path d="M11.600 0.800v3.400h3.300" fill="none" stroke="#c8c8c8" stroke-width="1"/><path d="M7.400 2.600h1.800v1.800H7.400zM7.400 6h1.800v1.800H7.400zM9.800 4.600l1.800 1.800M10.400 8.800l2.600-2.600" stroke="#c8c8c8" stroke-width="1" fill="#c8c8c8"/><rect x="0.500" y="9.100" width="14.200" height="6.700" fill="#c6397f"/><text x="1.100" y="15" font-family="Liberation Sans" font-weight="bold" font-size="6.600" fill="#2a2023" textLength="13" lengthAdjust="spacingAndGlyphs">SASS</text></svg>
<div class=ui style="left:3540px;top:349.5px;line-height:18px;font-size:11.7px;letter-spacing:0.019px;color:#f1f1f1;">_typography.scss</div>
<svg style="position:absolute;left:3480.5px;top:373.5px" width="8" height="8" viewBox="0 0 8 8"><path d="M7 .8V7H.8z" fill="#f1f1f1"/></svg>
<svg style="position:absolute;left:3500.5px;top:369px" width="16" height="16" viewBox="0 0 16 16"><path d="M4.4 6.600V4.700h3.200V2.500h7.500V13" fill="none" stroke="#dcb67a" stroke-width="1"/><path d="M1.2 7.200h10.200l3.200 6H3.800z" fill="#dcb67a"/></svg>
<div class=ui style="left:3522px;top:367.5px;line-height:18px;font-size:11.7px;letter-spacing:0.292px;color:#f1f1f1;">vendor</div>
<svg style="position:absolute;left:3518.5px;top:387px" width="16" height="16" viewBox="0 0 16 16"><path d="M3 1.6h6.4l3.2 3.2v9.6H3z" fill="none" stroke="#c8c8c8" stroke-width="1.2"/><path d="M5.4 12.4l2.6-6 2.6 6M6.4 10.4h3.2" fill="none" stroke="#e0584a" stroke-width="1.2"/><path d="M5 4.4h2.4" stroke="#c8c8c8" stroke-width="1.1"/></svg>
<div class=ui style="left:3540px;top:385.5px;line-height:18px;font-size:11.7px;letter-spacing:-0.035px;color:#f1f1f1;">normalize.css</div>
<svg style="position:absolute;left:3481.5px;top:407px" width="8" height="12" viewBox="0 0 8 12"><path d="M1.100 1.900L5 6 1.100 10.100z" fill="none" stroke="#f1f1f1" stroke-width="1.100"/></svg>
<svg style="position:absolute;left:3500.5px;top:405px" width="16" height="16" viewBox="0 0 16 16"><path d="M5.400 0.600h6.400l3.300 3.300v11.200H5.400z" fill="none" stroke="#c8c8c8" stroke-width="1.100"/><path d="M11.600 0.800v3.400h3.300" fill="none" stroke="#c8c8c8" stroke-width="1"/><path d="M7.400 2.600h1.800v1.800H7.400zM7.400 6h1.800v1.800H7.400zM9.800 4.600l1.800 1.800M10.400 8.800l2.600-2.600" stroke="#c8c8c8" stroke-width="1" fill="#c8c8c8"/><rect x="0.500" y="9.100" width="14.200" height="6.700" fill="#c6397f"/><text x="1.100" y="15" font-family="Liberation Sans" font-weight="bold" font-size="6.600" fill="#2a2023" textLength="13" lengthAdjust="spacingAndGlyphs">SASS</text></svg>
<div class=ui style="left:3522px;top:403.5px;line-height:18px;font-size:11.7px;letter-spacing:-0.301px;color:#f1f1f1;">Style.scss</div>
<svg style="position:absolute;left:3463.5px;top:425px" width="8" height="12" viewBox="0 0 8 12"><path d="M1.100 1.900L5 6 1.100 10.100z" fill="none" stroke="#f1f1f1" stroke-width="1.100"/></svg>
<svg style="position:absolute;left:3482.5px;top:423px" width="16" height="16" viewBox="0 0 16 16"><path d="M2.3 4.2h13.3v9H2.3z" fill="#dcb67a"/><path d="M6.6 4.2V2.5h8.5v1.7" fill="none" stroke="#dcb67a" stroke-width="1"/></svg>
<div class=ui style="left:3504px;top:421.5px;line-height:18px;font-size:11.7px;letter-spacing:0.271px;color:#f1f1f1;">media</div>
<svg style="position:absolute;left:3463.5px;top:443px" width="8" height="12" viewBox="0 0 8 12"><path d="M1.100 1.900L5 6 1.100 10.100z" fill="none" stroke="#f1f1f1" stroke-width="1.100"/></svg>
<svg style="position:absolute;left:3482.5px;top:441px" width="16" height="16" viewBox="0 0 16 16"><path d="M2.3 4.2h13.3v9H2.3z" fill="#dcb67a"/><path d="M6.6 4.2V2.5h8.5v1.7" fill="none" stroke="#dcb67a" stroke-width="1"/></svg>
<div class=ui style="left:3504px;top:439.5px;line-height:18px;font-size:11.7px;letter-spacing:0.564px;color:#f1f1f1;">obj</div>
<svg style="position:absolute;left:3462.5px;top:463.5px" width="8" height="8" viewBox="0 0 8 8"><path d="M7 .8V7H.8z" fill="#f1f1f1"/></svg>
<svg style="position:absolute;left:3482.5px;top:459px" width="16" height="16" viewBox="0 0 16 16"><path d="M4.4 6.600V4.700h3.200V2.500h7.500V13" fill="none" stroke="#dcb67a" stroke-width="1"/><path d="M1.2 7.200h10.200l3.200 6H3.800z" fill="#dcb67a"/></svg>
<div class=ui style="left:3504px;top:457.5px;line-height:18px;font-size:11.7px;letter-spacing:0.117px;color:#f1f1f1;">scripts</div>
<svg style="position:absolute;left:3500.5px;top:477px" width="16" height="16" viewBox="0 0 16 16"><path d="M3.600 2.500h11.600M6.300 2.500v9.800M12.400 2.500v7.500a2.400 2.400 0 0 1-2.400 2.400H1.800" fill="none" stroke="#f26b22" stroke-width="1.900"/></svg>
<div class=ui style="left:3522px;top:475.5px;line-height:18px;font-size:11.7px;letter-spacing:-0.014px;color:#f1f1f1;">cycle2.js</div>
<svg style="position:absolute;left:3463.5px;top:497px" width="8" height="12" viewBox="0 0 8 12"><path d="M1.100 1.900L5 6 1.100 10.100z" fill="none" stroke="#f1f1f1" stroke-width="1.100"/></svg>
<svg style="position:absolute;left:3482.5px;top:495px" width="16" height="16" viewBox="0 0 16 16"><path d="M2.8 13.2V6.600l2-2h2V2.600h8.300v10.600z" fill="none" stroke="#d0d0d0" stroke-width="1.100" stroke-dasharray="1.100 1.100"/></svg>
<div class=ui style="left:3504px;top:493.5px;line-height:18px;font-size:11.7px;letter-spacing:0.268px;color:#f1f1f1;">Umbraco</div>
<svg style="position:absolute;left:3463.5px;top:515px" width="8" height="12" viewBox="0 0 8 12"><path d="M1.100 1.900L5 6 1.100 10.100z" fill="none" stroke="#f1f1f1" stroke-width="1.100"/></svg>
<svg style="position:absolute;left:3482.5px;top:513px" width="16" height="16" viewBox="0 0 16 16"><path d="M2.8 13.2V6.600l2-2h2V2.600h8.300v10.600z" fill="none" stroke="#d0d0d0" stroke-width="1.100" stroke-dasharray="1.100 1.100"/></svg>
<div class=ui style="left:3504px;top:511.5px;line-height:18px;font-size:11.7px;letter-spacing:0.136px;color:#f1f1f1;">Umbraco_Client</div>
<svg style="position:absolute;left:3463.5px;top:533px" width="8" height="12" viewBox="0 0 8 12"><path d="M1.100 1.900L5 6 1.100 10.100z" fill="none" stroke="#f1f1f1" stroke-width="1.100"/></svg>
<svg style="position:absolute;left:3482.5px;top:531px" width="16" height="16" viewBox="0 0 16 16"><path d="M2.3 4.2h13.3v9H2.3z" fill="#dcb67a"/><path d="M6.6 4.2V2.5h8.5v1.7" fill="none" stroke="#dcb67a" stroke-width="1"/></svg>
<div class=ui style="left:3504px;top:529.5px;line-height:18px;font-size:11.7px;letter-spacing:-0.074px;color:#f1f1f1;">Views</div>
<svg style="position:absolute;left:3463.5px;top:551px" width="8" height="12" viewBox="0 0 8 12"><path d="M1.100 1.900L5 6 1.100 10.100z" fill="none" stroke="#f1f1f1" stroke-width="1.100"/></svg>
<svg style="position:absolute;left:3482.5px;top:549px" width="16" height="16" viewBox="0 0 16 16"><path d="M6 2h8.6v2.4h-2.2v7.8a2.2 2.2 0 0 1-2.2 2.2H6.4" fill="none" stroke="#c8c8c8" stroke-width="1.4"/><path d="M5.8 2v7.2" stroke="#c8c8c8" stroke-width="1.4"/><circle cx="3.8" cy="12.2" r="2.5" fill="none" stroke="#c8c8c8" stroke-width="1.6"/></svg>
<div class=ui style="left:3504px;top:547.5px;line-height:18px;font-size:11.7px;letter-spacing:0.329px;color:#f1f1f1;">compilerconfig.json</div>
<svg style="position:absolute;left:3482.5px;top:567px" width="16" height="16" viewBox="0 0 16 16"><path d="M5 3.600V1.600h5.800l3 3v9.600H10" fill="none" stroke="#c8c8c8" stroke-width="1.200"/><path d="M10.600 1.800v3.200h3" fill="none" stroke="#c8c8c8" stroke-width="1"/><circle cx="4.800" cy="11" r="4" fill="#252526" stroke="#1ba1e2" stroke-width="1.200"/><path d="M.800 11h8M4.800 7v8M3 8c-.7 2-.7 4 0 6M6.600 8c.7 2 .7 4 0 6" fill="none" stroke="#1ba1e2" stroke-width=".800"/></svg>
<div class=ui style="left:3504px;top:565.5px;line-height:18px;font-size:11.7px;letter-spacing:0.064px;color:#f1f1f1;">default.aspx</div>
<svg style="position:absolute;left:3482.5px;top:585px" width="16" height="16" viewBox="0 0 16 16"><path d="M5 1.6h5.8l3 3v9.6H9.4" fill="none" stroke="#c8c8c8" stroke-width="1.2"/><circle cx="4.6" cy="11.4" r="2.3" fill="none" stroke="#c8c8c8" stroke-width="1.5"/><path d="M4.6 7.6v1.2M4.6 14v1.2M.8 11.4H2M7.2 11.4h1.2M1.9 8.7l.9.9M6.4 13.2l.9.9M1.9 14.1l.9-.9M6.4 9.6l.9-.9" stroke="#c8c8c8" stroke-width="1.2"/></svg>
<div class=ui style="left:3504px;top:583.5px;line-height:18px;font-size:11.7px;letter-spacing:-0.185px;color:#f1f1f1;">Global.asax</div>
<svg style="position:absolute;left:3482.5px;top:603px" width="16" height="16" viewBox="0 0 16 16"><path d="M5.6 1.6h5.4l3 3v9.6H6.4" fill="none" stroke="#c8c8c8" stroke-width="1.2"/><path d="M3.8 9.6v5.8" stroke="#c8c8c8" stroke-width="1.8"/><path d="M1.4 4.8v2.6a2.4 2.4 0 0 0 4.8 0V4.8H4.8v2.8H2.8V4.8z" fill="#c8c8c8"/></svg>
<div class=ui style="left:3504px;top:601.5px;line-height:18px;font-size:11.7px;letter-spacing:0.122px;color:#f1f1f1;">packages.config</div>
<svg style="position:absolute;left:3463.5px;top:623px" width="8" height="12" viewBox="0 0 8 12"><path d="M1.100 1.900L5 6 1.100 10.100z" fill="none" stroke="#f1f1f1" stroke-width="1.100"/></svg>
<svg style="position:absolute;left:3482.5px;top:621px" width="16" height="16" viewBox="0 0 16 16"><path d="M5.6 1.6h5.4l3 3v9.6H6.4" fill="none" stroke="#c8c8c8" stroke-width="1.2"/><path d="M3.8 9.6v5.8" stroke="#c8c8c8" stroke-width="1.8"/><path d="M1.4 4.8v2.6a2.4 2.4 0 0 0 4.8 0V4.8H4.8v2.8H2.8V4.8z" fill="#c8c8c8"/></svg>
<div class=ui style="left:3504px;top:619.5px;line-height:18px;font-size:11.7px;letter-spacing:0.293px;color:#f1f1f1;">Web.config</div>
<div style="left:3534.5px;top:1956px;width:98.5px;height:20.5px;background:#252526;"></div>
<div style="left:3534px;top:1956px;width:1px;height:20.5px;background:#3f3f46;"></div>
<div style="left:3633px;top:1956px;width:1px;height:20.5px;background:#3f3f46;"></div>
<div style="left:3534px;top:1976px;width:100px;height:1px;background:#3f3f46;"></div>
<div class=ui style="left:3439.5px;top:1958.5px;line-height:16px;font-size:11.4px;color:#d0d0d0">.NET Reflector...</div>
<div class=ui style="left:3540px;top:1958.5px;line-height:16px;font-size:11.4px;color:#0097fb">Solution Explor...</div>
<div class=ui style="left:3638.5px;top:1958.5px;line-height:16px;font-size:11.4px;color:#d0d0d0">Team Explorer</div>
<div class=ui style="left:3722px;top:1958.5px;line-height:16px;font-size:11.4px;color:#d0d0d0">Class View</div>
<div style="left:3782px;top:0px;width:13.5px;height:1989px;background:#2d2d30;"></div>
<div class=ui style="left:3789.4px;top:-12px;font-size:12px;color:#d0d0d0;line-height:14px;transform-origin:0 0;transform:rotate(90deg) translateY(-14px)">Notifications</div>
</div></body></html>
